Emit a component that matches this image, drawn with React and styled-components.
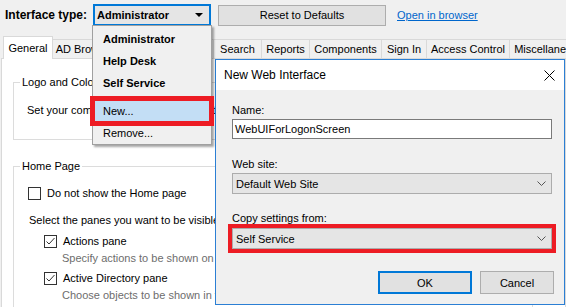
import React from "react";
import styled, { createGlobalStyle } from "styled-components";

const Global = createGlobalStyle`
  html, body { margin: 0; padding: 0; background: #f0f0f0; }
  body { font-family: "Liberation Sans", Arial, sans-serif; font-size: 11px; color: #000; }
  * { box-sizing: border-box; }
`;

const Screen = styled.div`
  position: relative;
  width: 566px;
  height: 307px;
  overflow: hidden;
  background: #f0f0f0;
`;

const Toolbar = styled.div`
  display: flex;
  align-items: center;
  height: 30px;
  padding-left: 5px;
`;

const ToolLabel = styled.div`
  width: 88px;
  font-size: 12px;
  font-weight: bold;
  white-space: nowrap;
`;

const Combo = styled.div`
  width: 118px;
  height: 22px;
  border: 2px solid #0078d7;
  background: #e5e5e5;
  display: flex;
  align-items: center;
  justify-content: space-between;
  padding: 0 6px 0 2px;
  font-weight: bold;
`;

const WinButton = styled.div`
  width: ${(p) => p.$w}px;
  height: ${(p) => p.$h || 21}px;
  margin-left: ${(p) => p.$ml || 0}px;
  border: ${(p) => (p.$default ? "2px solid #0078d7" : "1px solid #adadad")};
  background: #e1e1e1;
  display: flex;
  align-items: center;
  justify-content: center;
  white-space: nowrap;
`;

const Link = styled.a`
  margin-left: 11px;
  color: #0066cc;
  text-decoration: underline;
  white-space: nowrap;
`;

const TabStrip = styled.div`
  display: flex;
  align-items: flex-end;
  height: 22px;
  margin-top: 6px;
  padding-left: 3px;
  position: relative;
  z-index: 1;
`;

const Tab = styled.div`
  flex: none;
  width: ${(p) => p.$w}px;
  height: ${(p) => (p.$active ? 23 : 19)}px;
  margin-bottom: ${(p) => (p.$active ? -1 : 0)}px;
  margin-right: -1px;
  border: 1px solid #d9d9d9;
  border-bottom: none;
  background: ${(p) => (p.$active ? "#ffffff" : "#f0f0f0")};
  display: flex;
  align-items: center;
  justify-content: center;
  white-space: nowrap;
  overflow: hidden;
`;

const TabPanel = styled.div`
  margin-left: 1px;
  width: 565px;
  height: 260px;
  border: 1px solid #d9d9d9;
  background: #ffffff;
  padding: 17px 0 0 11px;
`;

const GroupBox = styled.fieldset`
  margin: ${(p) => p.$mt || 0}px 0 0 0;
  width: 520px;
  border: 1px solid #dcdcdc;
  padding: 0 0 ${(p) => p.$pb || 0}px 6px;
  min-width: 0;
`;

const Legend = styled.legend`
  padding: 0 2px;
  line-height: 13px;
`;

const Line = styled.div`
  margin-top: ${(p) => p.$mt || 0}px;
  margin-left: ${(p) => p.$ml || 0}px;
  line-height: 14px;
  white-space: nowrap;
  color: ${(p) => (p.$muted ? "#6d6d6d" : "#000")};
`;

const CheckRow = styled.div`
  display: flex;
  align-items: center;
  gap: 6px;
  margin-top: ${(p) => p.$mt || 0}px;
  margin-left: ${(p) => p.$ml || 0}px;
  height: 14px;
  white-space: nowrap;
`;

const Box = styled.span`
  flex: none;
  width: 13px;
  height: 13px;
  border: 1px solid #333;
  background: #fff;
  display: flex;
`;

const Menu = styled.div`
  position: absolute;
  left: 92px;
  top: 25px;
  width: 120px;
  display: flex;
  flex-direction: column;
  background: #f0f0f0;
  border: 1px solid #a0a0a0;
  padding: 2px 2px 0;
  box-shadow: 2px 2px 2px rgba(0, 0, 0, 0.35);
  z-index: 5;
`;

const MenuItem = styled.div`
  height: 20px;
  margin: 1px 0;
  padding-left: 8px;
  display: flex;
  align-items: center;
  font-weight: ${(p) => (p.$bold ? "bold" : "normal")};
  background: ${(p) => (p.$hl ? "#c3def5" : "transparent")};
  outline: ${(p) => (p.$mark ? "5px solid #ed1c24" : "none")};
  white-space: nowrap;
`;

const MenuSep = styled.div`
  height: 1px;
  margin: 2px 2px 3px;
  background: #bdbdbd;
`;

const Dialog = styled.div`
  position: absolute;
  left: 215px;
  top: 59px;
  width: 350px;
  height: 246px;
  border: 1px solid #2b7fd4;
  background: #f0f0f0;
  display: flex;
  flex-direction: column;
  z-index: 4;
`;

const TitleBar = styled.div`
  height: 30px;
  flex: none;
  background: #fff;
  display: flex;
  align-items: center;
  justify-content: space-between;
  padding: 0 9px 0 8px;
  font-size: 12px;
`;

const DialogBody = styled.div`
  padding: 13px 12px 0 16px;
`;

const TextBox = styled.div`
  height: 20px;
  margin-top: 2px;
  border: 1px solid #7a7a7a;
  background: #fff;
  padding-left: 2px;
  display: flex;
  align-items: center;
`;

const Select = styled.div`
  height: 21px;
  margin-top: ${(p) => p.$mt || 2}px;
  border: 1px solid #acacac;
  background: #e5e5e5;
  padding: 0 5px 0 3px;
  display: flex;
  align-items: center;
  justify-content: space-between;
  outline: ${(p) => (p.$mark ? "4px solid #ed1c24" : "none")};
`;

const ButtonRow = styled.div`
  display: flex;
  justify-content: flex-end;
  gap: 8px;
  margin-top: 22px;
  margin-right: -2px;
`;

const Chevron = () => (
  <svg width="9" height="5" viewBox="0 0 9 5">
    <polyline points="0.5,0.5 4.5,4.5 8.5,0.5" fill="none" stroke="#555" strokeWidth="1" />
  </svg>
);

const Check = () => (
  <svg width="11" height="11" viewBox="0 0 11 11">
    <polyline points="1.5,5.5 4,8 9.5,2" fill="none" stroke="#333" strokeWidth="1" />
  </svg>
);

const tabs = [
  ["General", 50],
  ["AD Browser", 66],
  ["Home Page", 97],
  ["Search", 49],
  ["Reports", 49],
  ["Components", 73],
  ["Sign In", 46],
  ["Access Control", 84],
  ["Miscellaneous", 80],
];

export default function App() {
  return (
    <>
      <Global />
      <Screen>
        <Toolbar>
          <ToolLabel>Interface type:</ToolLabel>
          <Combo>
            <span>Administrator</span>
            <svg width="8" height="4" viewBox="0 0 8 4">
              <polygon points="0,0 8,0 4,4" fill="#000" />
            </svg>
          </Combo>
          <WinButton $w={168} $ml={7}>Reset to Defaults</WinButton>
          <Link>Open in browser</Link>
        </Toolbar>

        <TabStrip>
          {tabs.map(([t, w], i) => (
            <Tab key={t} $w={w} $active={i === 0}>{t}</Tab>
          ))}
        </TabStrip>

        <TabPanel>
          <GroupBox $pb={22}>
            <Legend>Logo and Colors</Legend>
            <Line $mt={14} $ml={7}>Set your company logo and colors for the Web interface.</Line>
          </GroupBox>
          <GroupBox $mt={20} $pb={20}>
            <Legend>Home Page</Legend>
            <CheckRow $mt={13} $ml={8}>
              <Box />
              <span>Do not show the Home page</span>
            </CheckRow>
            <Line $mt={13} $ml={9}>Select the panes you want to be visible on the Home page:</Line>
            <CheckRow $mt={7} $ml={24}>
              <Box><Check /></Box>
              <span>Actions pane</span>
            </CheckRow>
            <Line $mt={3} $ml={42} $muted>Specify actions to be shown on the Home page.</Line>
            <CheckRow $mt={6} $ml={24}>
              <Box><Check /></Box>
              <span>Active Directory pane</span>
            </CheckRow>
            <Line $mt={3} $ml={42} $muted>Choose objects to be shown in the Active Directory pane.</Line>
          </GroupBox>
        </TabPanel>

        <Menu>
          <MenuItem $bold>Administrator</MenuItem>
          <MenuItem $bold>Help Desk</MenuItem>
          <MenuItem $bold>Self Service</MenuItem>
          <MenuSep />
          <MenuItem $hl $mark>New...</MenuItem>
          <MenuItem>Remove...</MenuItem>
        </Menu>

        <Dialog>
          <TitleBar>
            <span>New Web Interface</span>
            <svg width="11" height="11" viewBox="0 0 11 11">
              <line x1="0.5" y1="0.5" x2="10.5" y2="10.5" stroke="#000" strokeWidth="1" />
              <line x1="10.5" y1="0.5" x2="0.5" y2="10.5" stroke="#000" strokeWidth="1" />
            </svg>
          </TitleBar>
          <DialogBody>
            <Line>Name:</Line>
            <TextBox>WebUIForLogonScreen</TextBox>
            <Line $mt={18}>Web site:</Line>
            <Select>
              <span>Default Web Site</span>
              <Chevron />
            </Select>
            <Line $mt={17}>Copy settings from:</Line>
            <Select $mt={3} $mark>
              <span>Self Service</span>
              <Chevron />
            </Select>
            <ButtonRow>
              <WinButton $w={94} $h={23} $default>OK</WinButton>
              <WinButton $w={74} $h={23}>Cancel</WinButton>
            </ButtonRow>
          </DialogBody>
        </Dialog>
      </Screen>
    </>
  );
}
